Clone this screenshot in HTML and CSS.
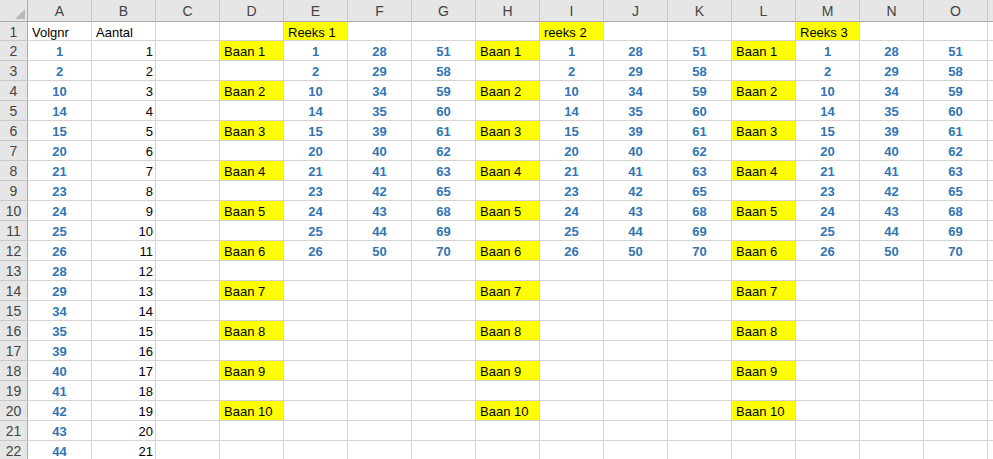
FILE: index.html
```html
<!DOCTYPE html>
<html lang="nl">
<head>
    <meta charset="UTF-8">
    <meta name="viewport" content="width=device-width, initial-scale=1.0">
    <title>Banen indeling</title>
    <link rel="stylesheet" href="styles.css">
</head>
<body>
    <div id="sheet" class="sheet"></div>

    <script>
        const letters = "ABCDEFGHIJKLMNO".split("");
        const volgnr = [1, 2, 10, 14, 15, 20, 21, 23, 24, 25, 26, 28, 29, 34, 35, 39, 40, 41, 42, 43, 44];
        const reeks = [
            [1, 2, 10, 14, 15, 20, 21, 23, 24, 25, 26],
            [28, 29, 34, 35, 39, 40, 41, 42, 43, 44, 50],
            [51, 58, 59, 60, 61, 62, 63, 65, 68, 69, 70]
        ];

        // cells[row][col] = { text, cls }
        const cells = {};
        function set(row, col, text, cls) {
            if (!cells[row]) cells[row] = {};
            cells[row][col] = { text: text, cls: cls };
        }

        set(1, "A", "Volgnr", "left");
        set(1, "B", "Aantal", "left");
        set(1, "E", "Reeks 1", "left fill");
        set(1, "I", "reeks 2", "left fill");
        set(1, "M", "Reeks 3", "left fill");

        volgnr.forEach((n, i) => {
            set(i + 2, "A", n, "num");
            set(i + 2, "B", i + 1, "right");
        });

        // three blocks: D/E/F/G, H/I/J/K, L/M/N/O
        [["D", "E", "F", "G"], ["H", "I", "J", "K"], ["L", "M", "N", "O"]].forEach(block => {
            for (let k = 1; k <= 10; k++) {
                set(k * 2, block[0], "Baan " + k, "left fill");
            }
            reeks.forEach((list, j) => {
                list.forEach((n, i) => set(i + 2, block[j + 1], n, "num"));
            });
        });

        const sheet = document.getElementById("sheet");
        function add(text, cls) {
            const d = document.createElement("div");
            d.className = "cell " + cls;
            d.textContent = text;
            sheet.appendChild(d);
        }

        add("", "corner");
        letters.forEach(l => add(l, "col-head"));
        add("", "col-head edge"); // next column, only a sliver is visible

        for (let r = 1; r <= 22; r++) {
            add(r, "row-head");
            letters.forEach(l => {
                const c = cells[r] && cells[r][l];
                add(c ? c.text : "", c ? c.cls : "");
            });
            add("", "edge");
        }
    </script>
</body>
</html>
```

FILE: styles.css
```css
body {
    margin: 0;
    background-color: #ffffff;
    font-family: "Liberation Sans", Arial, sans-serif;
    overflow: hidden;
}

.sheet {
    display: grid;
    grid-template-columns: 28px repeat(15, 64px) 5px;
    grid-template-rows: 22px 19px repeat(21, 20px);
}

.cell {
    box-sizing: border-box;
    border-right: 1px solid #d4d4d4;
    border-bottom: 1px solid #d4d4d4;
    font-size: 13px;
    line-height: 21px;
    color: #000;
    white-space: nowrap;
    overflow: visible;
}

.edge {
    border-right: none;
}

.left {
    padding-left: 4px;
}

.right {
    text-align: right;
    padding-right: 2px;
}

.num {
    text-align: center;
    font-weight: bold;
    color: #2f75b5;
}

.fill {
    background-color: #ffff00;
}

.corner,
.col-head,
.row-head {
    background-color: #e6e6e6;
    color: #444;
    font-size: 14px;
    text-align: center;
    border-color: #c8c8c8;
}

.col-head {
    line-height: 22px;
    border-bottom-color: #ababab;
}

.row-head {
    line-height: 20px;
    border-right-color: #ababab;
}

.corner {
    position: relative;
    border-bottom-color: #ababab;
    border-right-color: #ababab;
}

.corner::after {
    content: "";
    position: absolute;
    right: 2px;
    bottom: 2px;
    width: 10px;
    height: 10px;
    background-color: #b9b9b9;
    clip-path: polygon(100% 0, 100% 100%, 0 100%);
}
```
